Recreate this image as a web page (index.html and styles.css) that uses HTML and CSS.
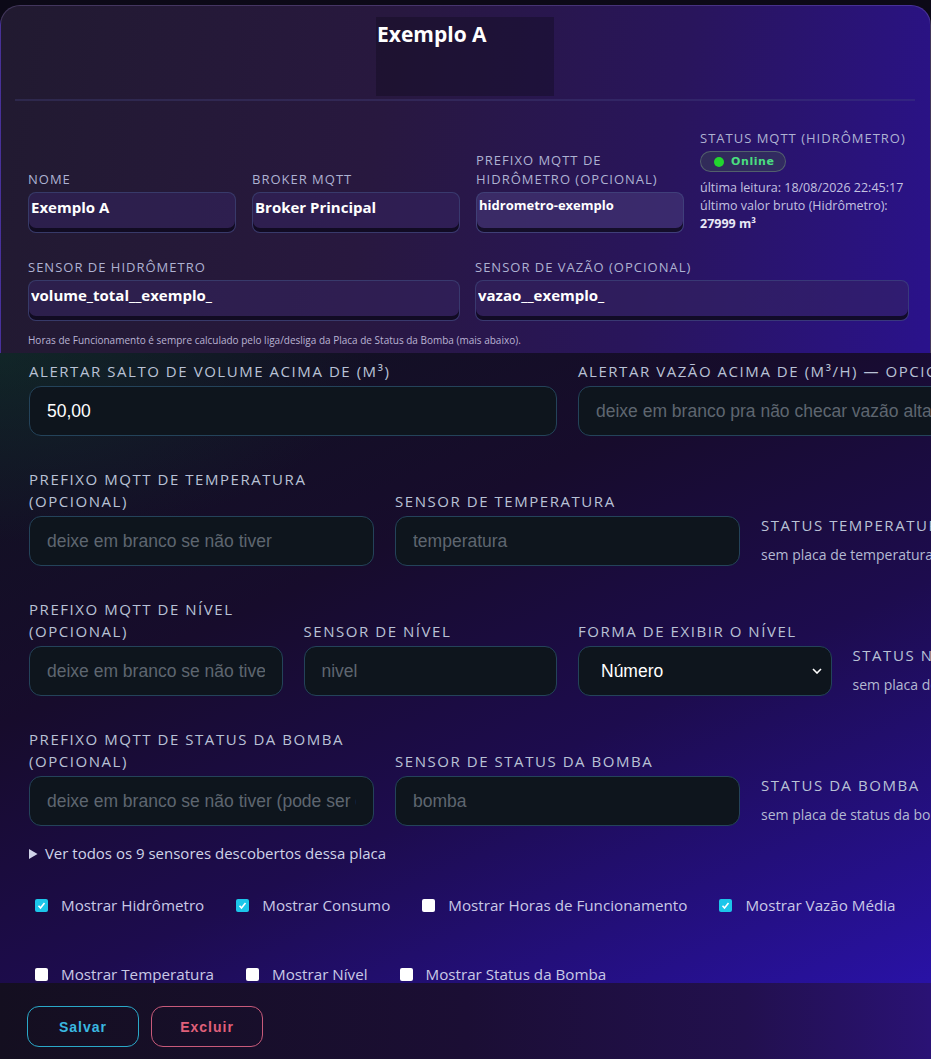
FILE: index.html
```html
<!DOCTYPE html>
<html lang="pt-BR">
<head>
    <meta charset="UTF-8">
    <title>Exemplo A</title>
    <link rel="stylesheet" href="styles.css">
</head>
<body>
<div class="card">
    <div class="card-head">
        <div class="title-box"><h1>Exemplo A</h1></div>
    </div>

    <div class="grid-top">
        <div class="field">
            <label for="nome">Nome</label>
            <input class="in" id="nome" type="text" value="Exemplo A">
        </div>
        <div class="field">
            <label for="broker">Broker MQTT</label>
            <input class="in" id="broker" type="text" value="Broker Principal">
        </div>
        <div class="field">
            <label for="prefixo">Prefixo MQTT de Hidrômetro (opcional)</label>
            <input class="in small" id="prefixo" type="text" value="hidrometro-exemplo">
        </div>
        <div class="status">
            <div class="label">Status MQTT (Hidrômetro)</div>
            <span class="badge"><i class="dot"></i>Online</span>
            <div class="meta first">última leitura: 18/08/2026 22:45:17</div>
            <div class="meta">último valor bruto (Hidrômetro):</div>
            <div class="meta strong">27999 m³</div>
        </div>
    </div>

    <div class="grid-sensors">
        <div class="field">
            <label for="sensorHidro">Sensor de Hidrômetro</label>
            <input class="in" id="sensorHidro" type="text" value="volume_total__exemplo_">
        </div>
        <div class="field">
            <label for="sensorVazao">Sensor de Vazão (opcional)</label>
            <input class="in" id="sensorVazao" type="text" value="vazao__exemplo_">
        </div>
    </div>

    <p class="note">Horas de Funcionamento é sempre calculado pelo liga/desliga da Placa de Status da Bomba (mais abaixo).</p>
</div>

<div class="pane">
    <div class="pane-inner">
        <div class="row cols-2">
            <div class="fld">
                <label for="alertaVolume">Alertar salto de volume acima de (m³)</label>
                <input class="dark" id="alertaVolume" type="text" value="50,00">
            </div>
            <div class="fld">
                <label for="alertaVazao">Alertar vazão acima de (m³/h) — opcional</label>
                <input class="dark" id="alertaVazao" type="text" placeholder="deixe em branco pra não checar vazão alta">
            </div>
        </div>

        <div class="row cols-3">
            <div class="fld">
                <label for="prefTemp">Prefixo MQTT de temperatura (opcional)</label>
                <input class="dark" id="prefTemp" type="text" placeholder="deixe em branco se não tiver">
            </div>
            <div class="fld">
                <label for="sensorTemp">Sensor de temperatura</label>
                <input class="dark" id="sensorTemp" type="text" placeholder="temperatura">
            </div>
            <div class="stat">
                <div class="stat-label">Status temperatura</div>
                <div class="stat-text">sem placa de temperatura</div>
            </div>
        </div>

        <div class="row cols-4">
            <div class="fld">
                <label for="prefNivel">Prefixo MQTT de nível (opcional)</label>
                <input class="dark" id="prefNivel" type="text" placeholder="deixe em branco se não tiver">
            </div>
            <div class="fld">
                <label for="sensorNivel">Sensor de nível</label>
                <input class="dark" id="sensorNivel" type="text" placeholder="nivel">
            </div>
            <div class="fld">
                <label for="formaNivel">Forma de exibir o nível</label>
                <select class="dark" id="formaNivel">
                    <option>Número</option>
                    <option>Barra</option>
                </select>
            </div>
            <div class="stat">
                <div class="stat-label">Status nível</div>
                <div class="stat-text">sem placa de nível</div>
            </div>
        </div>

        <div class="row cols-3">
            <div class="fld">
                <label for="prefBomba">Prefixo MQTT de status da bomba (opcional)</label>
                <input class="dark" id="prefBomba" type="text" placeholder="deixe em branco se não tiver (pode ser o mesmo)">
            </div>
            <div class="fld">
                <label for="sensorBomba">Sensor de status da bomba</label>
                <input class="dark" id="sensorBomba" type="text" placeholder="bomba">
            </div>
            <div class="stat">
                <div class="stat-label">Status da bomba</div>
                <div class="stat-text">sem placa de status da bomba</div>
            </div>
        </div>

        <details class="sensors">
            <summary>Ver todos os 9 sensores descobertos dessa placa</summary>
        </details>

        <div class="checks">
            <label class="chk"><input type="checkbox" checked>Mostrar Hidrômetro</label>
            <label class="chk"><input type="checkbox" checked>Mostrar Consumo</label>
            <label class="chk"><input type="checkbox">Mostrar Horas de Funcionamento</label>
            <label class="chk"><input type="checkbox" checked>Mostrar Vazão Média</label>
            <label class="chk"><input type="checkbox">Mostrar Temperatura</label>
            <label class="chk"><input type="checkbox">Mostrar Nível</label>
            <label class="chk"><input type="checkbox">Mostrar Status da Bomba</label>
        </div>
    </div>
</div>

<div class="actions">
    <button class="btn save">Salvar</button>
    <button class="btn danger">Excluir</button>
</div>
</body>
</html>
```

FILE: styles.css
```css
body {
    margin: 0;
    background: #0c0917;
    font-family: "Open Sans", "Noto Sans", sans-serif;
    color: #e6e6f5;
    overflow: hidden;
}

/* cartão de cima */
.card {
    margin-top: 5px;
    border: 1px solid rgba(150, 130, 200, 0.28);
    border-bottom: 0;
    border-radius: 20px 20px 0 0;
    background: linear-gradient(100deg, #211a30 0%, #28183f 40%, #29155c 70%, #2a128c 100%);
    padding: 11px 23px 6px 27px;
}
.card-head {
    margin: 0 -8px 0 -13px;
    border-bottom: 2px solid rgba(70, 70, 130, 0.35);
    padding-bottom: 3px;
}
.title-box {
    width: 178px;
    height: 79px;
    margin: 0 auto;
    background: rgba(12, 10, 24, 0.35);
}
.title-box h1 {
    margin: 0;
    padding: 3px 2px 0 1px;
    font-size: 21px;
    line-height: 28px;
    font-weight: 700;
    color: #fff;
}

.grid-top {
    display: grid;
    grid-template-columns: repeat(4, 208px);
    column-gap: 16px;
    align-items: end;
    margin-top: 28px;
}
.grid-sensors {
    display: grid;
    grid-template-columns: 432px 434px;
    column-gap: 15px;
    margin-top: 25px;
}
.field label,
.status .label {
    display: block;
    font-size: 13px;
    line-height: 19px;
    letter-spacing: 1px;
    text-transform: uppercase;
    color: #aeb2d2;
    margin-bottom: 3px;
}
.in {
    display: block;
    width: 100%;
    height: 41px;
    box-sizing: border-box;
    background: rgba(52, 36, 96, 0.55);
    border: 1px solid rgba(70, 90, 140, 0.45);
    border-radius: 8px;
    box-shadow: inset 0 -4px 0 rgba(8, 6, 20, 0.75);
    color: #fff;
    font: 700 15px "Open Sans", sans-serif;
    padding: 0 2px 12px;
    outline: none;
}
.in.small {
    font-size: 13px;
    padding-bottom: 16px;
    background: rgba(70, 56, 120, 0.6);
}

.badge {
    display: flex;
    align-items: center;
    gap: 7px;
    width: fit-content;
    height: 21px;
    box-sizing: border-box;
    padding: 0 10px 0 13px;
    margin-top: 3px;
    border: 1px solid rgba(110, 140, 120, 0.55);
    border-radius: 11px;
    background: rgba(60, 70, 80, 0.45);
    font: 700 11px "DejaVu Sans", sans-serif;
    letter-spacing: 0.6px;
    color: #4ade80;
}
.dot {
    width: 10px;
    height: 10px;
    border-radius: 50%;
    background: #22d62e;
}
.meta {
    font-size: 12.5px;
    line-height: 18px;
    color: #c4c2e0;
}
.meta.first { margin-top: 7px; }
.meta.strong {
    font-weight: 700;
    color: #e8e8f6;
}

.note {
    margin: 12px 0 0;
    font-size: 10px;
    line-height: 14px;
    color: #b9b3d3;
}

.pane {
    height: 630px;
    overflow: hidden;
    background:
        radial-gradient(ellipse 40% 30% at 0% 0%, rgba(18, 60, 50, 0.45), transparent),
        linear-gradient(155deg, #10131f 0%, #170c2c 35%, #1d0c4e 62%, #2912a6 100%);
}
.pane-inner {
    width: 1077px;
    padding: 7px 0 0 29px;
}
.row {
    display: grid;
    column-gap: 21px;
    align-items: end;
    margin-bottom: 32px;
}
.cols-2 { grid-template-columns: repeat(2, 1fr); }
.cols-3 { grid-template-columns: repeat(3, 1fr); }
.cols-4 { grid-template-columns: repeat(4, 1fr); }

.fld label,
.stat-label {
    display: block;
    font-size: 15px;
    line-height: 22px;
    letter-spacing: 1.55px;
    text-transform: uppercase;
    color: #b9c2d6;
    margin-bottom: 4px;
}
.dark {
    display: block;
    width: 100%;
    height: 50px;
    box-sizing: border-box;
    background: #0e151d;
    border: 1px solid #24435a;
    border-radius: 12px;
    padding: 0 17px;
    color: #fff;
    font: 17.5px "Liberation Sans", Arial, sans-serif;
    outline: none;
}
.dark::placeholder { color: #5e6670; }
select.dark {
    appearance: none;
    -webkit-appearance: none;
    padding-left: 22px;
    background: #0e151d url("data:image/svg+xml,%3Csvg xmlns='http://www.w3.org/2000/svg' width='10' height='6' viewBox='0 0 10 6'%3E%3Cpath d='M1 1l4 4 4-4' fill='none' stroke='%23ffffff' stroke-width='1.6'/%3E%3C/svg%3E") no-repeat right 9px center;
}

.stat { height: 50px; }
.stat-label {
    line-height: 18px;
    margin: 0;
}
.stat-text {
    margin-top: 11px;
    font-size: 14px;
    line-height: 20px;
    color: #b4bad2;
    white-space: nowrap;
}

.sensors {
    margin: -16px 0 0;
    font-size: 15px;
    line-height: 22px;
    color: #d0d4e8;
}
.sensors summary { cursor: pointer; }

.checks {
    display: flex;
    flex-wrap: wrap;
    max-width: 960px;
    column-gap: 26px;
    row-gap: 47px;
    margin-top: 30px;
}
.chk {
    display: inline-flex;
    align-items: center;
    gap: 13px;
    font-size: 15.2px;
    line-height: 22px;
    color: #c9c9e6;
}
.chk input {
    appearance: none;
    -webkit-appearance: none;
    width: 13px;
    height: 13px;
    margin: 0 0 0 6px;
    border-radius: 2px;
    background: #fff;
}
.chk input:checked {
    background: #1cc6ea url("data:image/svg+xml,%3Csvg xmlns='http://www.w3.org/2000/svg' width='13' height='13' viewBox='0 0 13 13'%3E%3Cpath d='M3.5 6.8l2 2.2 4-5' fill='none' stroke='%23ffffff' stroke-width='1.6'/%3E%3C/svg%3E") no-repeat center;
}

/* barra de ações */
.actions {
    display: flex;
    gap: 12px;
    height: 76px;
    box-sizing: border-box;
    padding: 23px 27px 0;
    background: linear-gradient(90deg, #140f20 0%, #1b0e34 50%, #22104e 80%, #2a1275 100%);
}
.btn {
    width: 112px;
    height: 41px;
    background: transparent;
    border: 1px solid;
    border-radius: 12px;
    font: 700 14px "Liberation Sans", Arial, sans-serif;
    letter-spacing: 1px;
    cursor: pointer;
}
.btn.save {
    color: #3ab8e0;
    border-color: #2aa8c8;
}
.btn.danger {
    color: #e0607a;
    border-color: #c85a7a;
}
```
